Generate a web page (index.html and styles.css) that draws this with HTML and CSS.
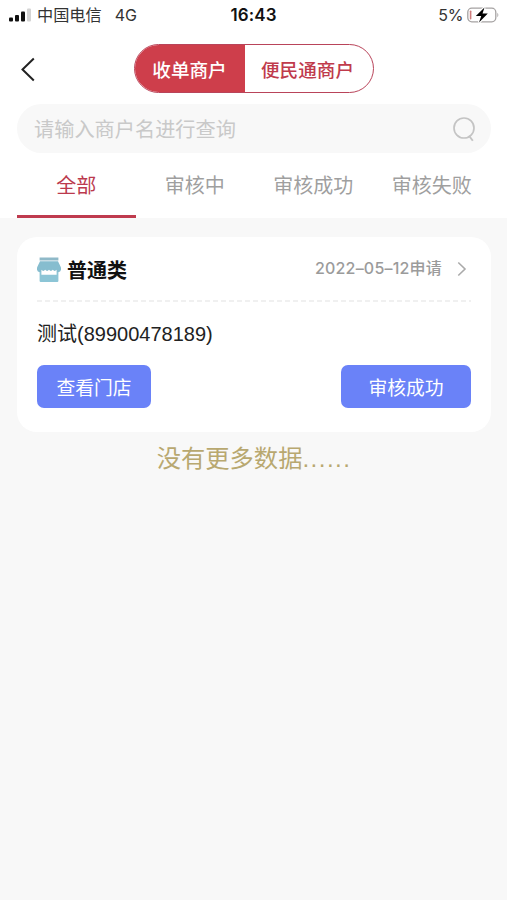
FILE: index.html
```html
<!DOCTYPE html>
<html lang="zh-CN">
<head>
  <meta charset="UTF-8">
  <meta name="viewport" content="width=device-width, initial-scale=1.0">
  <title>商户查询</title>
  <link rel="stylesheet" href="styles.css">
</head>
<body>

  <header>
    <!-- Status bar -->
    <div class="status-bar">
      <div class="status-left">
        <svg class="signal" width="23" height="14" viewBox="0 0 23 14">
          <rect x="0" y="9.5" width="4" height="4" rx="1" fill="#111"/>
          <rect x="6" y="7" width="4" height="6.5" rx="1" fill="#111"/>
          <rect x="12" y="3.5" width="4" height="10" rx="1" fill="#111"/>
          <rect x="18" y="0.5" width="4" height="13" rx="1" fill="#d4d4d4"/>
        </svg>
        <span class="carrier">中国电信</span>
        <span>4G</span>
      </div>
      <span class="time">16:43</span>
      <div class="status-right">
        <span>5%</span>
        <svg width="32" height="16" viewBox="0 0 32 16">
          <rect x="0.8" y="1.2" width="28" height="13.6" rx="4" fill="none" stroke="#a5a2a2" stroke-width="1.3"/>
          <rect x="2.8" y="3.5" width="1.6" height="9" rx="0.8" fill="#cf7d7d"/>
          <path d="M30.4 5.8c1.2.8 1.2 3.6 0 4.4z" fill="#a5a2a2"/>
          <path d="M17.5 0.5 8.8 9.1h5.4L12 15.5l8.8-8.9h-5.3z" fill="#000" stroke="#fff" stroke-width="2.4" paint-order="stroke"/>
        </svg>
      </div>
    </div>

    <!-- Navigation -->
    <nav>
      <a href="#" class="back">
        <svg width="16" height="26" viewBox="0 0 16 26">
          <path d="M13.8 2.5 2.5 13.5l11.3 11" fill="none" stroke="#222" stroke-width="2"/>
        </svg>
      </a>
      <div class="switch">
        <a href="#" class="switch-item active">收单商户</a>
        <a href="#" class="switch-item">便民通商户</a>
      </div>
    </nav>

    <!-- Search -->
    <form class="search">
      <input type="text" placeholder="请输入商户名进行查询">
      <svg width="26" height="28" viewBox="0 0 26 28">
        <circle cx="13" cy="13" r="10" fill="none" stroke="#c4c4c4" stroke-width="1.7"/>
        <path d="m18.2 21 3.6 4.8" fill="none" stroke="#c4c4c4" stroke-width="1.9"/>
      </svg>
    </form>

    <div class="tabs">
      <a href="#" class="tab current">全部</a>
      <a href="#" class="tab">审核中</a>
      <a href="#" class="tab">审核成功</a>
      <a href="#" class="tab">审核失败</a>
    </div>
  </header>

  <!-- Merchant list -->
  <main>
    <section class="card">
      <div class="card-head">
        <svg class="shop" width="24" height="26" viewBox="0 0 24 26">
          <path d="M2.6 0.5h18.8v3H2.6z" fill="#8fb9c8"/>
          <path d="M3 4.3h18L24 10.5v2.2a3 3 0 0 1-2.8 2.5H2.8A3 3 0 0 1 0 12.7v-2.2z" fill="#86bdcf"/>
          <path d="M2.6 15h18.8v9a1 1 0 0 1-1 1H3.6a1 1 0 0 1-1-1z" fill="#8cc5d6"/>
          <path d="M4.4 12.8q1.9 2.2 3.8 0 1.9 2.2 3.8 0 1.9 2.2 3.8 0 1.9 2.2 3.8 0v5H4.4z" fill="#fff"/>
        </svg>
        <h2>普通类</h2>
        <span class="date">2022–05–12申请</span>
        <svg class="arrow" width="10" height="16" viewBox="0 0 10 16">
          <path d="M1.3 1.5 8 8l-6.7 6.5" fill="none" stroke="#aaa" stroke-width="1.6"/>
        </svg>
      </div>
      <svg class="divider" width="434" height="2">
        <path d="M0 1h434" stroke="#ececec" stroke-width="1.5" stroke-dasharray="5 3"/>
      </svg>
      <p class="merchant">测试(89900478189)</p>
      <div class="card-actions">
        <button type="button" class="btn-shop">查看门店</button>
        <button type="button" class="btn-state">审核成功</button>
      </div>
    </section>
    <p class="no-more">没有更多数据<span>......</span></p>
  </main>

</body>
</html>
```
FILE: styles.css
```css
* {
  box-sizing: border-box;
}

body {
  margin: 0;
  min-height: 900px;
  background-color: #f8f8f8;
  font-family: "Liberation Sans", "Noto Sans CJK SC", sans-serif;
  color: #1a1a1a;
}

a {
  text-decoration: none;
}

svg {
  display: block;
  flex: none;
}

header {
  height: 218px;
  padding: 0 17px;
  background-color: #fff;
}

/* Status bar */
.status-bar {
  display: grid;
  grid-template-columns: 1fr auto 1fr;
  align-items: center;
  height: 30px;
  margin: 0 -9px;
  font-family: Inter, "Noto Sans CJK SC", sans-serif;
  font-size: 16px;
  line-height: 30px;
  color: #333;
}

.status-left,
.status-right {
  display: flex;
  align-items: center;
}

.status-left {
  padding-left: 1px;
}

.signal {
  margin-right: 5px;
}

.carrier {
  margin-right: 13px;
  font-size: 16.2px;
}

.time {
  font-size: 17px;
  font-weight: 600;
  letter-spacing: 0.1px;
  color: #111;
}

.status-right {
  justify-content: flex-end;
  gap: 4px;
  letter-spacing: -0.4px;
}

/* Navigation */
nav {
  display: flex;
  align-items: center;
  height: 49px;
  margin-top: 14px;
}

.back {
  width: 117px;
  padding-left: 3px;
}

.switch {
  display: flex;
  width: 240px;
  height: 49px;
  border: 1.5px solid #b9445a;
  border-radius: 25px;
  overflow: hidden;
}

.switch-item {
  flex: 1;
  padding: 2px 3px 0 0;
  font-size: 18.6px;
  font-weight: 500;
  line-height: 48px;
  text-align: center;
  color: #c03b4c;
}

.switch-item.active {
  flex: none;
  width: 110px;
  padding-right: 1px;
  background-color: #ce3e4b;
  color: #fff;
}

/* Search */
.search {
  display: flex;
  align-items: center;
  height: 49px;
  margin: 11px -1px 0 0;
  padding: 0 14px 0 17px;
  border-radius: 25px;
  background-color: #f8f8f8;
}

.search input {
  flex: 1;
  min-width: 0;
  padding: 3px 0 0;
  border: 0;
  outline: 0;
  background: none;
  font-family: inherit;
  font-size: 20.2px;
}

.search input::placeholder {
  color: #c9c9c9;
}

/* Tabs */
.tabs {
  display: grid;
  grid-template-columns: repeat(4, 1fr);
  height: 65px;
  margin-right: -1px;
}

.tab {
  padding-top: 5px;
  font-size: 20px;
  line-height: 57px;
  text-align: center;
  color: #9f9f9f;
}

.tab.current {
  border-bottom: 3px solid #bf3b4e;
  color: #bb3a4e;
}

/* Merchant card */
main {
  padding: 19px 16px 0 17px;
}

.card {
  height: 195px;
  padding: 0 20px;
  border-radius: 20px;
  background-color: #fff;
}

.card-head {
  display: flex;
  align-items: center;
  height: 63px;
  padding-top: 3px;
}

.card-head h2 {
  margin: -2px auto 0 6px;
  font-size: 20px;
  font-weight: 700;
  color: #111;
}

.date {
  margin: -7px 15px 0 0;
  font-family: Inter, "Noto Sans CJK SC", sans-serif;
  font-size: 16px;
  font-weight: 500;
  letter-spacing: 0.2px;
  color: #9b9b9b;
}

.arrow {
  margin: -2px 4px 0 0;
}

.merchant {
  margin: 16px 0 15px;
  font-size: 20px;
  line-height: 32px;
  color: #222;
}

.card-actions {
  display: flex;
  justify-content: space-between;
}

.card-actions button {
  height: 43px;
  padding: 0 0 1px;
  border: 0;
  border-radius: 7px;
  background-color: #6a82f8;
  font-family: inherit;
  font-size: 18.8px;
  color: #fff;
}

.btn-shop {
  width: 114px;
}

.btn-state {
  width: 130px;
}

.no-more {
  margin: 9px 0 0;
  font-size: 24.3px;
  line-height: 36px;
  text-align: center;
  color: #b8a870;
}

.no-more span {
  letter-spacing: 1.4px;
}
```
